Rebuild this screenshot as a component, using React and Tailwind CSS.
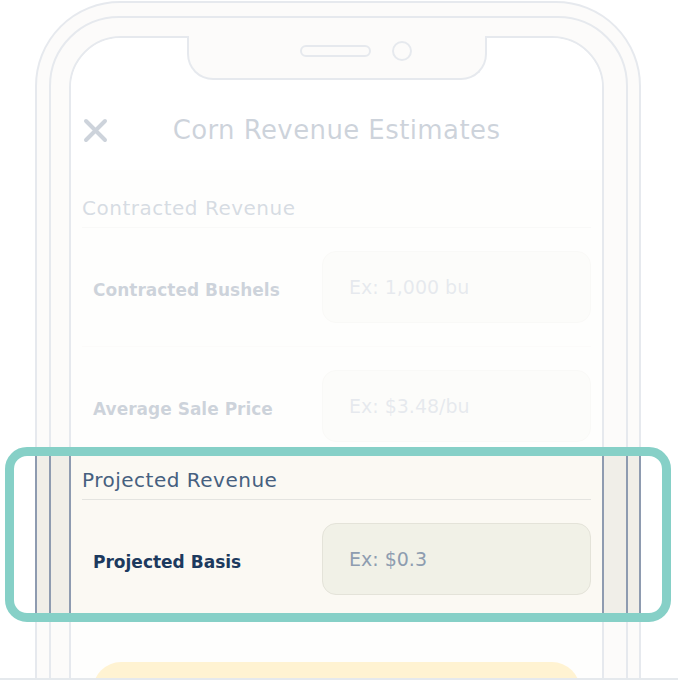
import React from "react";

function Row({ label, placeholder, last }) {
  return (
    <div className={"flex items-center py-[23px] " + (last ? "" : "border-b border-[#efeee8]")}>
      <div className="w-[240px] pl-[11px] pt-[5px] text-[17px] font-bold text-[#1c3a5e] leading-[24px]">{label}</div>
      <div className="w-[269px] h-[72px] rounded-[14px] border border-[#e4e3d9] bg-[#f1f1e7] flex items-center pl-[26px] text-[19px] text-[#8e9db0]">
        {placeholder}
      </div>
    </div>
  );
}

function SectionHeader({ children }) {
  return (
    <div className="pt-[3px] pb-[7px] border-b border-[#e4e4e0] text-[20px] tracking-[0.5px] leading-[24px] text-[#46607f]">
      {children}
    </div>
  );
}

export default function App() {
  return (
    <div className="w-[678px] h-[680px] flex flex-col bg-white overflow-hidden font-['DejaVu_Sans',sans-serif]">
      <div className="relative flex-1 overflow-hidden">
        <div className="ml-[35px] mt-[1px] w-[606px] h-[800px] rounded-t-[85px] border-2 border-[#8e9bb0] bg-[#f0eee8] pt-[13px] pl-[12px] pr-[11px]">
          <div className="h-full rounded-t-[70px] border-2 border-[#8e9bb0] pt-[18px] pl-[18px] pr-[22px]">
            <div className="h-full rounded-t-[52px] border-2 border-[#8e9bb0] bg-[#fbf9f3] flex flex-col">
              <div className="bg-white rounded-t-[50px]">
                <div className="relative -mt-[2px] mx-auto w-[300px] h-[44px] border-2 border-t-0 border-[#8e9bb0] rounded-b-[26px] bg-[#f0eee8]">
                  <div className="flex items-center h-[30px] pl-[111px] gap-[21px]">
                    <div className="w-[71px] h-[12px] rounded-full border-2 border-[#8e9bb0]"></div>
                    <div className="w-[20px] h-[20px] rounded-full border-2 border-[#8e9bb0]"></div>
                  </div>
                </div>
                <div className="pt-[25px] pb-[15px]">
                  <div className="flex items-center h-[50px]">
                    <div className="w-[49px] pl-[12px]">
                      <svg width="25" height="25" viewBox="0 0 25 25" fill="none">
                        <path d="M3 3L22 22M22 3L3 22" stroke="#1c3a5e" strokeWidth="4" strokeLinecap="round" />
                      </svg>
                    </div>
                    <div className="flex-1 text-center text-[26px] tracking-[0.4px] text-[#1c3a5e] leading-none">
                      Corn Revenue Estimates
                    </div>
                    <div className="w-[49px]"></div>
                  </div>
                </div>
              </div>
              <div className="px-[11px] pt-[23px]">
                <SectionHeader>Contracted Revenue</SectionHeader>
                <Row label="Contracted Bushels" placeholder="Ex: 1,000 bu" />
                <Row label="Average Sale Price" placeholder="Ex: $3.48/bu" last />
                <SectionHeader>Projected Revenue</SectionHeader>
                <Row label="Projected Basis" placeholder="Ex: $0.3" last />
                <div className="mt-[44px] mx-[11px] h-[60px] rounded-[28px] bg-[#fdc633]"></div>
              </div>
            </div>
          </div>
        </div>
        <div className="pointer-events-none absolute left-[5px] top-[447px] w-[666px] h-[175px] border-[9px] border-[#86d0c7] rounded-[22px] shadow-[0_0_0_2000px_rgba(255,255,255,0.78)]"></div>
      </div>
      <div className="h-[2px] bg-[#e5e9ed]"></div>
    </div>
  );
}
